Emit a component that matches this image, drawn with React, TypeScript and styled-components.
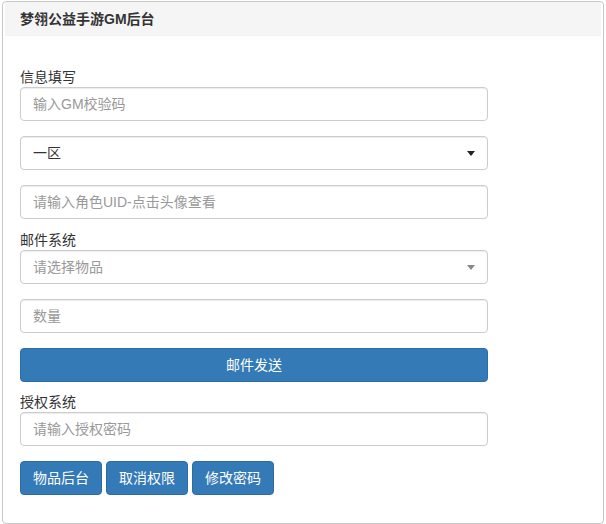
import React from 'react'
import styled, { createGlobalStyle } from 'styled-components'

const FONT = `"Liberation Sans", "Noto Sans CJK SC", sans-serif`

const GlobalStyle = createGlobalStyle`
  html, body {
    margin: 0;
    padding: 0;
    background: #fff;
  }
  body {
    font-family: ${FONT};
    font-size: 14px;
    line-height: 20px;
    color: #333;
  }
  * {
    box-sizing: border-box;
  }
`

const Page = styled.div`
  padding: 1px 2px 0 2px;
`

const Panel = styled.div`
  border: 1px solid #c8c8c8;
  border-radius: 4px;
  background: #fff;
  height: 523px;
  overflow: hidden;
`

const PanelHeading = styled.div`
  height: 34px;
  margin: 0 2px;
  display: flex;
  align-items: center;
  padding-left: 15px;
  background: #f5f5f5;
  border-bottom: 1px solid #f2f2f2;
`

const Title = styled.h3`
  margin: 0;
  font-size: 14px;
  font-weight: bold;
  color: #333;
`

const PanelBody = styled.div`
  padding: 31px 17px 0;
`

const Form = styled.form`
  width: 468px;
  display: flex;
  flex-direction: column;
`

const Label = styled.label`
  display: block;
  height: 20px;
  line-height: 20px;
  font-size: 14px;
  color: #333;
`

const Field = styled.div<{ $mb?: number }>`
  position: relative;
  margin-bottom: ${(p) => p.$mb ?? 15}px;
`

const Input = styled.input`
  display: block;
  width: 100%;
  height: 34px;
  padding: 6px 12px;
  font-family: ${FONT};
  font-size: 14px;
  color: #555;
  background: #fff;
  border: 1px solid #ccc;
  border-radius: 4px;
  box-shadow: inset 0 1px 1px rgba(0, 0, 0, 0.075);
  outline: none;

  &::placeholder {
    color: #999;
  }
`

const SelectBox = styled.div<{ $placeholder?: boolean }>`
  height: 34px;
  padding: 6px 12px;
  font-size: 14px;
  line-height: 20px;
  color: ${(p) => (p.$placeholder ? '#999' : '#333')};
  background: #fff;
  border: 1px solid #ccc;
  border-radius: 4px;
  box-shadow: inset 0 1px 1px rgba(0, 0, 0, 0.075);
`

const Caret = styled.span<{ $muted?: boolean }>`
  position: absolute;
  right: 13px;
  top: 15px;
  width: 0;
  height: 0;
  border-left: 4px solid transparent;
  border-right: 4px solid transparent;
  border-top: 5px solid ${(p) => (p.$muted ? '#888' : '#222')};
`

const Button = styled.button<{ $block?: boolean }>`
  display: inline-block;
  width: ${(p) => (p.$block ? '100%' : 'auto')};
  height: 34px;
  padding: 6px 12px;
  font-family: ${FONT};
  font-size: 14px;
  line-height: 20px;
  color: #fff;
  background: #337ab7;
  border: 1px solid #2e6da4;
  border-radius: 4px;
  cursor: pointer;
`

const ButtonRow = styled.div`
  display: flex;
  gap: 4px;
`

export default function App() {
  return (
    <Page>
      <GlobalStyle />
      <Panel>
        <PanelHeading>
          <Title>梦翎公益手游GM后台</Title>
        </PanelHeading>
        <PanelBody>
          <Form onSubmit={(e) => e.preventDefault()}>
            <Label>信息填写</Label>
            <Field>
              <Input placeholder="输入GM校验码" />
            </Field>
            <Field>
              <SelectBox>一区</SelectBox>
              <Caret />
            </Field>
            <Field $mb={11}>
              <Input placeholder="请输入角色UID-点击头像查看" />
            </Field>

            <Label>邮件系统</Label>
            <Field>
              <SelectBox $placeholder>请选择物品</SelectBox>
              <Caret $muted />
            </Field>
            <Field>
              <Input placeholder="数量" />
            </Field>
            <Field $mb={10}>
              <Button type="button" $block>
                邮件发送
              </Button>
            </Field>

            <Label>授权系统</Label>
            <Field>
              <Input placeholder="请输入授权密码" />
            </Field>
            <ButtonRow>
              <Button type="button">物品后台</Button>
              <Button type="button">取消权限</Button>
              <Button type="button">修改密码</Button>
            </ButtonRow>
          </Form>
        </PanelBody>
      </Panel>
    </Page>
  )
}
